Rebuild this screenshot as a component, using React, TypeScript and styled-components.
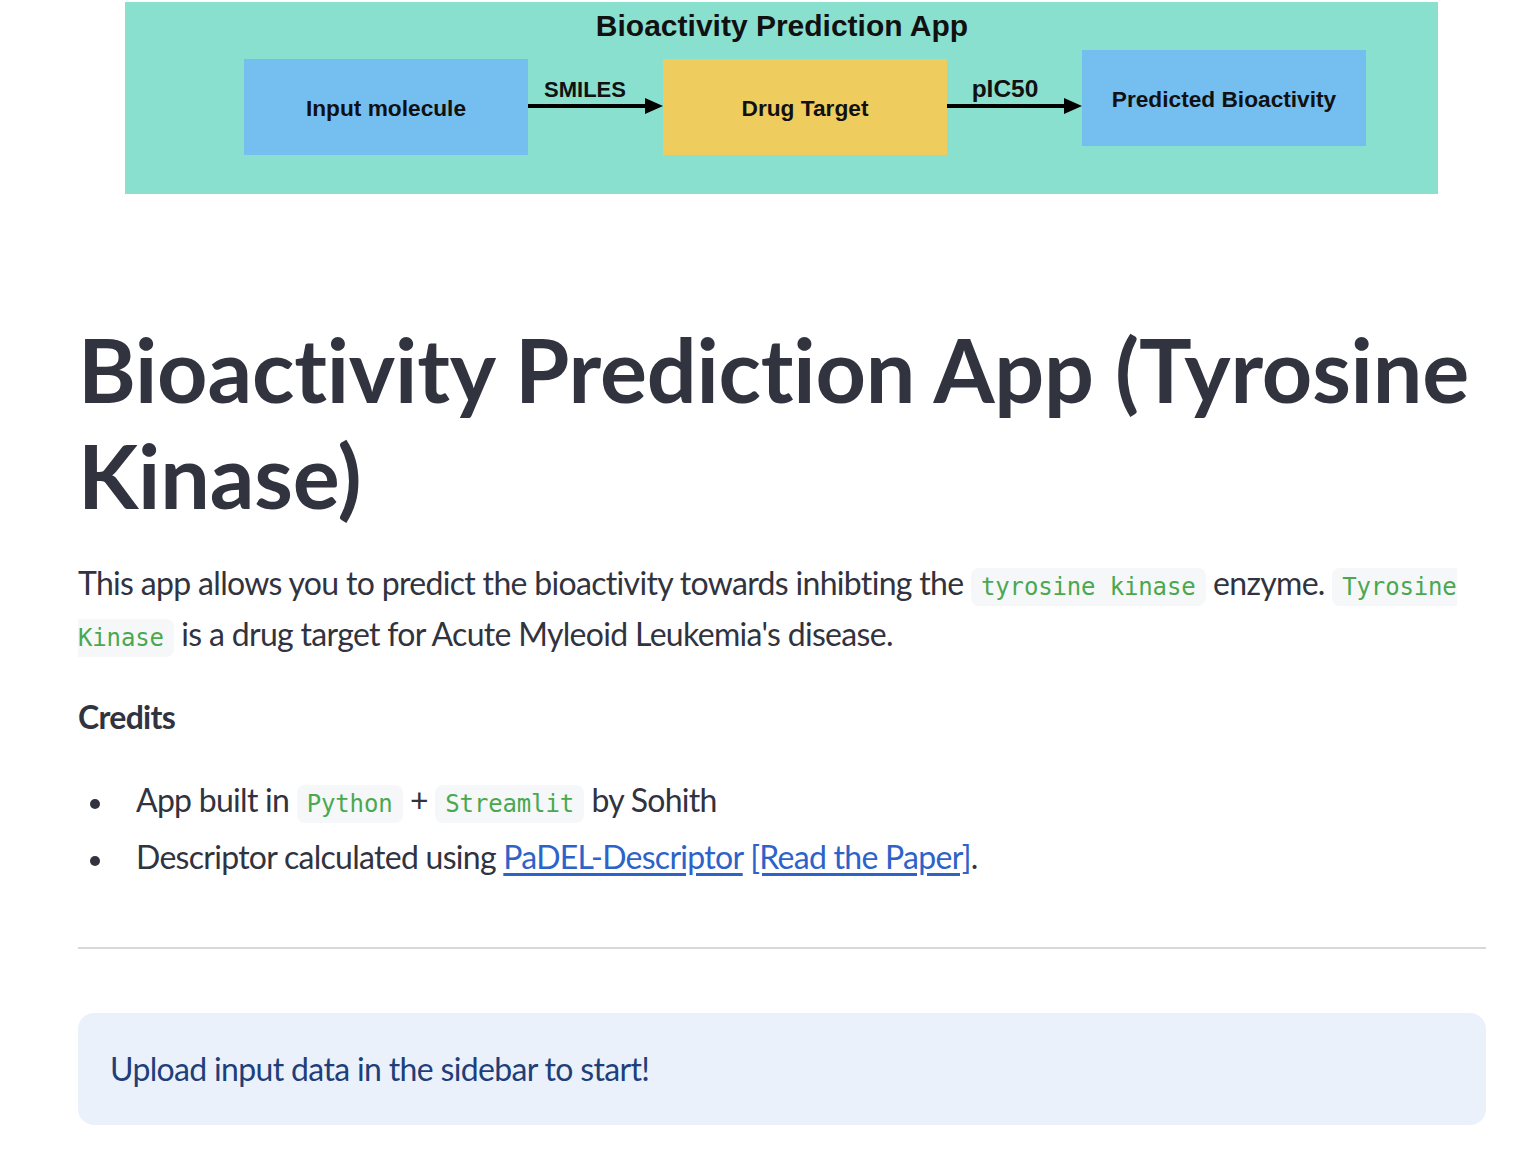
import React, { FC } from 'react';
import styled, { createGlobalStyle } from 'styled-components';

const TEXT = '#31333f';
const CODE_GREEN = '#4aa84f';

const GlobalStyle = createGlobalStyle`
  html, body {
    margin: 0;
    padding: 0;
    background: #ffffff;
  }

  body {
    font-family: Lato, "Noto Sans", sans-serif;
    color: ${TEXT};
  }
`;

const Main = styled.main`
  width: 1408px;
  padding: 2px 0 40px 78px;
  display: flex;
  flex-direction: column;
`;

const BannerWrap = styled.div`
  display: flex;
  justify-content: center;
  padding-right: 1px;
`;

const Title = styled.h1`
  margin: 123px 0 0 0;
  font-family: Lato, "Noto Sans", sans-serif;
  font-size: 88px;
  font-weight: 700;
  line-height: 1.2;
  letter-spacing: -0.2px;
  color: ${TEXT};
`;

const Paragraph = styled.p<{ $bold?: boolean }>`
  margin: ${(p) => (p.$bold ? '31px 0 0 0' : '29px 0 0 0')};
  font-size: 32px;
  line-height: 1.6;
  letter-spacing: -0.68px;
  font-weight: ${(p) => (p.$bold ? 700 : 400)};
`;

const Code = styled.code`
  font-family: "DejaVu Sans Mono", "Liberation Mono", monospace;
  font-size: 24px;
  letter-spacing: -0.15px;
  color: ${CODE_GREEN};
  background: #f6f7f9;
  border-radius: 8px;
  padding: 5px 10px;
`;

const List = styled.ul`
  margin: 32px 0 0 0;
  padding: 0 0 0 58px;
  list-style: none;
  font-size: 32px;
  line-height: 1.6;
  letter-spacing: -0.72px;
`;

const Item = styled.li`
  margin: 0 0 6px 0;

  &::before {
    content: '';
    display: inline-block;
    width: 10px;
    height: 10px;
    border-radius: 50%;
    background: ${TEXT};
    margin: 0 36px 0 -46px;
    vertical-align: middle;
  }
`;

const Link = styled.a`
  color: #2d63c8;
  text-decoration: underline;
  text-underline-offset: 4px;
`;

const Rule = styled.hr`
  margin: 59px 0 0 0;
  border: none;
  border-top: 2px solid #d7d8db;
`;

const InfoBox = styled.div`
  margin-top: 64px;
  background: #ebf1fb;
  border-radius: 16px;
  padding: 34px 32px 33px;
  font-size: 32px;
  line-height: 1.4;
  letter-spacing: -0.66px;
  color: #1e3f7a;
`;

const Banner: FC = () => {
  const boxFont = 'Liberation Sans, Arial, sans-serif';
  return (
    <svg width="1313" height="192" viewBox="0 0 1313 192">
      <rect x="0" y="0" width="1313" height="192" fill="#8ae0cf" />
      <text x="657" y="34" textAnchor="middle" fontFamily={boxFont} fontWeight="700"
            fontSize="30" fill="#111">Bioactivity Prediction App</text>

      <rect x="119" y="57" width="284" height="96" fill="#75bef0" />
      <text x="261" y="114" textAnchor="middle" fontFamily={boxFont} fontWeight="700"
            fontSize="22.7" fill="#111">Input molecule</text>

      <rect x="538" y="57" width="284" height="96" fill="#eecd5e" />
      <text x="680" y="114" textAnchor="middle" fontFamily={boxFont} fontWeight="700"
            fontSize="22.7" fill="#111">Drug Target</text>

      <rect x="957" y="48" width="284" height="96" fill="#75bef0" />
      <text x="1099" y="105" textAnchor="middle" fontFamily={boxFont} fontWeight="700"
            fontSize="22.7" fill="#111">Predicted Bioactivity</text>

      <text x="460" y="95" textAnchor="middle" fontFamily={boxFont} fontWeight="700"
            fontSize="22" fill="#111">SMILES</text>
      <line x1="403" y1="104" x2="522" y2="104" stroke="#000" strokeWidth="4" />
      <polygon points="520,96 538,104 520,112" fill="#000" />

      <text x="880" y="95" textAnchor="middle" fontFamily={boxFont} fontWeight="700"
            fontSize="24.5" fill="#111">pIC50</text>
      <line x1="822" y1="104" x2="941" y2="104" stroke="#000" strokeWidth="4" />
      <polygon points="939,96 957,104 939,112" fill="#000" />
    </svg>
  );
};

const App: FC = () => {
  return (
    <>
      <GlobalStyle />
      <Main>
        <BannerWrap>
          <Banner />
        </BannerWrap>
        <Title>Bioactivity Prediction App (Tyrosine Kinase)</Title>
        <Paragraph>
          This app allows you to predict the bioactivity towards inhibting the <Code>tyrosine kinase</Code> enzyme.{' '}
          <Code>Tyrosine Kinase</Code> is a drug target for Acute Myleoid Leukemia's disease.
        </Paragraph>
        <Paragraph $bold>Credits</Paragraph>
        <List>
          <Item>App built in <Code>Python</Code> + <Code>Streamlit</Code> by Sohith</Item>
          <Item>
            Descriptor calculated using <Link href="#">PaDEL-Descriptor</Link>{' '}
            <Link href="#">[Read the Paper]</Link>.
          </Item>
        </List>
        <Rule />
        <InfoBox>Upload input data in the sidebar to start!</InfoBox>
      </Main>
    </>
  );
};

export default App;
